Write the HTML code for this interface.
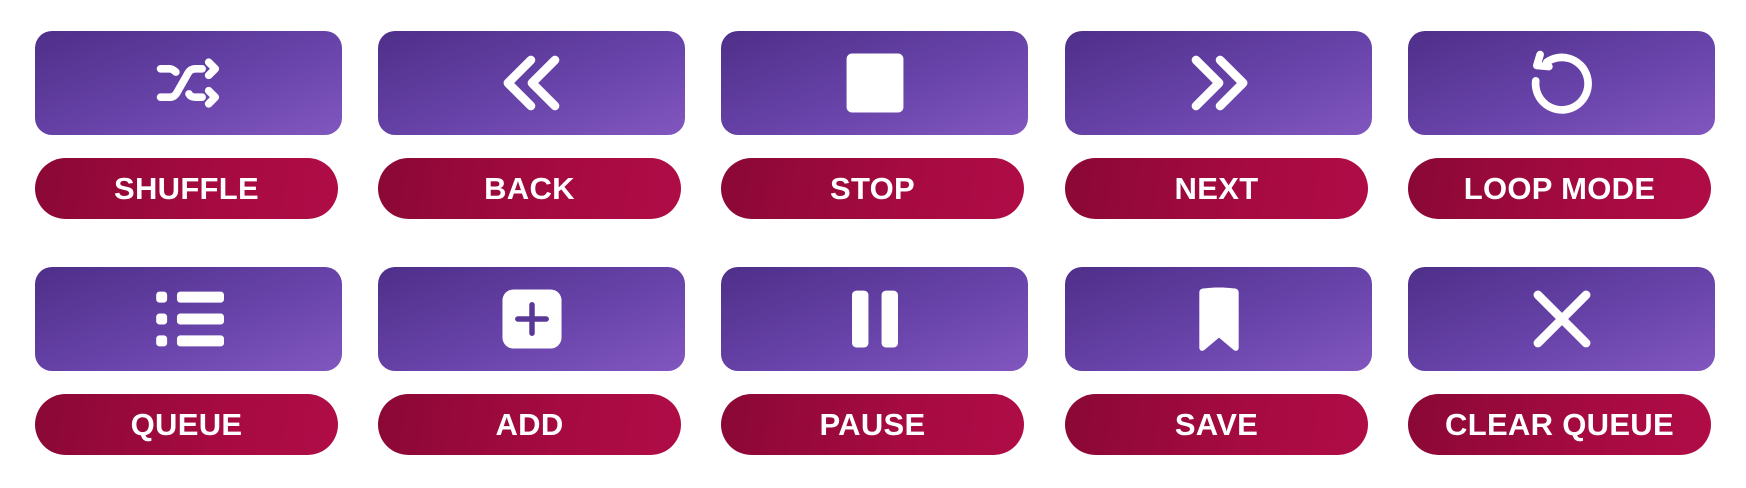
<!DOCTYPE html>
<html><head><meta charset="utf-8"><style>
html,body{margin:0;padding:0;background:#fff;width:1746px;height:488px;overflow:hidden}
.c{position:absolute;width:307px}
.b{position:absolute;left:0;width:307px;height:104px;border-radius:17px;background:linear-gradient(160deg,#4e2f89 0%,#6a45ac 60%,#8157bf 100%);display:flex;align-items:center;justify-content:center}
.l{position:absolute;left:0;width:303px;height:61px;border-radius:31px;background:linear-gradient(100deg,#8a0835 0%,#a60a40 60%,#b00c47 100%);color:#fff;font:bold 31px "Liberation Sans",sans-serif;display:flex;align-items:center;justify-content:center;letter-spacing:0.3px}
svg{width:70px;height:70px}
</style></head><body>
<div class="c" style="left:35px;top:31px"><div class="b" style="top:0"><svg viewBox="0 0 64 64" fill="none" stroke="#fff" stroke-width="7" stroke-linecap="round" stroke-linejoin="round"><path d="M6 19h8c3 0 5 2 6 3"/><path d="M6 45h8c4 0 6-2 8-6l8-14c2-4 4-6 8-6h6"/><path d="M32 42c1 2 3 3 6 3h6"/><path d="M50 13l6 6-6 6"/><path d="M50 39l6 6-6 6"/></svg></div><div class="l" style="top:127px">SHUFFLE</div></div>
<div class="c" style="left:378px;top:31px"><div class="b" style="top:0"><svg viewBox="0 0 64 64" fill="none" stroke="#fff" stroke-width="8" stroke-linecap="round" stroke-linejoin="round"><path d="M31 11L10 32l21 21"/><path d="M53 11L32 32l21 21"/></svg></div><div class="l" style="top:127px">BACK</div></div>
<div class="c" style="left:721px;top:31px"><div class="b" style="top:0"><svg viewBox="0 0 64 64"><rect x="6" y="5" width="52" height="54" rx="5" fill="#fff"/></svg></div><div class="l" style="top:127px">STOP</div></div>
<div class="c" style="left:1065px;top:31px"><div class="b" style="top:0"><svg viewBox="0 0 64 64" fill="none" stroke="#fff" stroke-width="8" stroke-linecap="round" stroke-linejoin="round"><path d="M11 11l21 21-21 21"/><path d="M33 11l21 21-21 21"/></svg></div><div class="l" style="top:127px">NEXT</div></div>
<div class="c" style="left:1408px;top:31px"><div class="b" style="top:0"><svg viewBox="0 0 64 64" fill="none" stroke="#fff" stroke-width="7" stroke-linecap="round" stroke-linejoin="round"><path d="M8 30a24 24 0 1 0 10-17"/><path d="M12 6l-3 10 11 1" /></svg></div><div class="l" style="top:127px">LOOP MODE</div></div>

<div class="c" style="left:35px;top:267px"><div class="b" style="top:0"><svg viewBox="0 0 64 64" fill="#fff"><rect x="2" y="7" width="10" height="10" rx="3"/><rect x="2" y="27" width="10" height="10" rx="3"/><rect x="2" y="47" width="10" height="10" rx="3"/><rect x="21" y="7" width="43" height="10" rx="3"/><rect x="21" y="27" width="43" height="10" rx="3"/><rect x="21" y="47" width="43" height="10" rx="3"/></svg></div><div class="l" style="top:127px">QUEUE</div></div>
<div class="c" style="left:378px;top:267px"><div class="b" style="top:0"><svg viewBox="0 0 64 64"><rect x="5" y="5" width="54" height="54" rx="10" fill="#fff"/><path d="M32 19v26M19 32h26" stroke="#5a3898" stroke-width="5" stroke-linecap="round"/></svg></div><div class="l" style="top:127px">ADD</div></div>
<div class="c" style="left:721px;top:267px"><div class="b" style="top:0"><svg viewBox="0 0 64 64" fill="#fff"><rect x="11" y="6" width="15" height="52" rx="4"/><rect x="38" y="6" width="15" height="52" rx="4"/></svg></div><div class="l" style="top:127px">PAUSE</div></div>
<div class="c" style="left:1065px;top:267px"><div class="b" style="top:0"><svg viewBox="0 0 64 64"><path d="M14 8c0-3 2-4 5-4 8-1 18-1 26 0 3 0 5 1 5 4v50c0 3-3 4-5 2l-13-11-13 11c-2 2-5 1-5-2z" fill="#fff"/></svg></div><div class="l" style="top:127px">SAVE</div></div>
<div class="c" style="left:1408px;top:267px"><div class="b" style="top:0"><svg viewBox="0 0 64 64" fill="none" stroke="#fff" stroke-width="8" stroke-linecap="round"><path d="M10 10l44 44M54 10L10 54"/></svg></div><div class="l" style="top:127px">CLEAR QUEUE</div></div>
</body></html>
